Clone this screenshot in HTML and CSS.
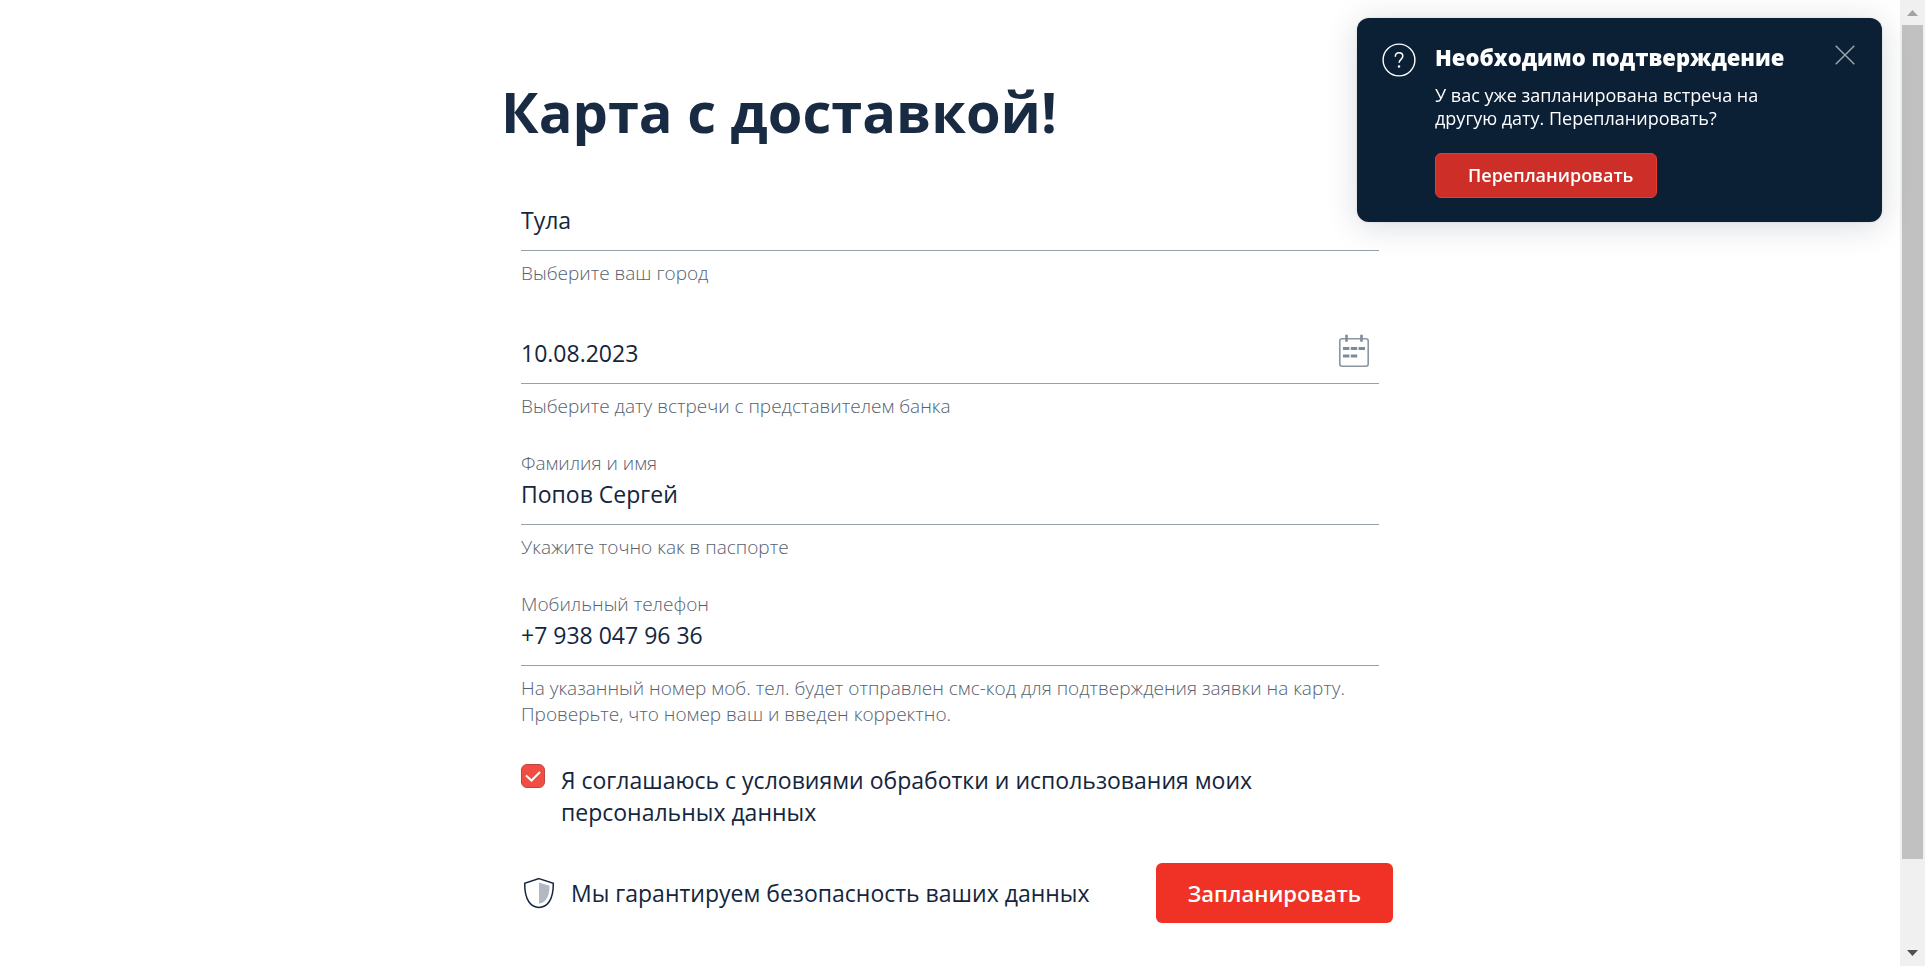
FILE: index.html
```html
<!DOCTYPE html>
<html lang="ru">
<head>
  <meta charset="utf-8">
  <meta name="viewport" content="width=device-width, initial-scale=1">
  <title>Карта с доставкой!</title>
  <link rel="stylesheet" href="styles.css">
</head>
<body>
  <div class="page">
    <main class="content">
      <h1 class="title">Карта с доставкой!</h1>
      <form class="form">
        <div class="field">
          <input class="field__input" id="city" type="text" value="Тула" aria-label="Город" aria-describedby="city-hint">
          <p class="field__hint" id="city-hint">Выберите ваш город</p>
        </div>

        <div class="field field--date">
          <div class="field__box">
            <input class="field__input" id="date" type="text" value="10.08.2023" aria-label="Дата встречи" aria-describedby="date-hint">
            <button class="calendar" type="button" aria-label="Открыть календарь">
              <svg width="32" height="34" viewBox="0 0 32 34" fill="none">
                <rect x="1.8" y="4.8" width="28.4" height="27.4" rx="2.2" stroke="#8a95a1" stroke-width="1.6"/>
                <path d="M8.5 .8v7M23.5 .8v7" stroke="#7f8b98" stroke-width="2.6"/>
                <path d="M5 14.5h6.4M12.8 14.5h6.4M20.6 14.5h6.4M5 22h6.4M12.8 22h6.4" stroke="#7f8b98" stroke-width="3"/>
              </svg>
            </button>
          </div>
          <p class="field__hint" id="date-hint">Выберите дату встречи с представителем банка</p>
        </div>

        <div class="field">
          <label class="field__label" for="name">Фамилия и имя</label>
          <input class="field__input" id="name" type="text" value="Попов Сергей" aria-describedby="name-hint">
          <p class="field__hint" id="name-hint">Укажите точно как в паспорте</p>
        </div>

        <div class="field">
          <label class="field__label" for="phone">Мобильный телефон</label>
          <input class="field__input" id="phone" type="tel" value="+7 938 047 96 36" aria-describedby="phone-hint">
          <p class="field__hint" id="phone-hint">На указанный номер моб. тел. будет отправлен смс-код для подтверждения заявки на карту. Проверьте, что номер ваш и введен корректно.</p>
        </div>

        <div class="agreement">
          <span class="checkbox">
            <input class="checkbox__input" id="agree" type="checkbox" checked>
            <svg class="checkbox__tick" width="24" height="24" viewBox="0 0 24 24" fill="none" aria-hidden="true">
              <path d="M5 11.5l5.5 5L19 8" stroke="#fff" stroke-width="2"/>
            </svg>
          </span>
          <label class="agreement__text" for="agree">Я соглашаюсь с условиями обработки и использования моих персональных данных</label>
        </div>

        <div class="footer">
          <svg width="32" height="32" viewBox="0 0 32 32" fill="none" aria-hidden="true">
            <path d="M16 1.6L30.3 6.2C30.4 14 29.5 20 26 25 23.5 28.5 20 30.4 16 30.4S8.5 28.5 6 25C2.5 20 1.6 14 1.7 6.2z" stroke="#14263d" stroke-width="1.5"/>
            <path d="M16 5.5l10.5 3.3c0 6-.9 10.2-3.4 13.7-1.9 2.7-4.3 4-7.1 4.1z" fill="#b3b9c2"/>
          </svg>
          <p class="footer__text">Мы гарантируем безопасность ваших данных</p>
          <button class="submit" type="submit">Запланировать</button>
        </div>
      </form>
    </main>
    <div class="scrollbar" aria-hidden="true">
      <svg width="25" height="25" viewBox="0 0 25 25"><path d="M7 16h11l-5.5-6z" fill="#a3a3a3"/></svg>
      <div class="scrollbar__track"><div class="scrollbar__thumb"></div></div>
      <svg width="25" height="25" viewBox="0 0 25 25"><path d="M7 9h11l-5.5 6z" fill="#505050"/></svg>
    </div>
  </div>

  <section class="toast" role="alertdialog" aria-labelledby="toast-title" aria-describedby="toast-text">
    <svg width="34" height="34" viewBox="0 0 34 34" fill="none" aria-hidden="true">
      <circle cx="17" cy="17" r="15.9" stroke="#fff" stroke-width="1.4"/>
      <path d="M13.3 13.7c0-2.6 1.6-4 3.8-4s3.7 1.3 3.7 3.4c0 3.2-3.7 3.3-3.7 6.7" stroke="#fff" stroke-width="1.5"/>
      <circle cx="17" cy="23.5" r="1.2" fill="#fff"/>
    </svg>
    <div class="toast__body">
      <h2 class="toast__title" id="toast-title">Необходимо подтверждение</h2>
      <p class="toast__text" id="toast-text">У вас уже запланирована встреча на другую дату. Перепланировать?</p>
      <button class="toast__action" type="button">Перепланировать</button>
    </div>
    <button class="toast__close" type="button" aria-label="Закрыть">
      <svg width="20" height="20" viewBox="0 0 20 20" fill="none"><path d="M.7.7l18.6 18.6M19.3.7L.7 19.3" stroke="#9fa7b1" stroke-width="1.4"/></svg>
    </button>
  </section>
</body>
</html>
```
FILE: styles.css
```css
* {
  box-sizing: border-box;
}

body,
h1,
h2,
p {
  margin: 0;
}

body {
  background: #fff;
  color: #14263d;
  font-family: "Open Sans", "Noto Sans", sans-serif;
  font-size: 23px;
  line-height: 32px;
  overflow: hidden;
}

button,
input {
  font: inherit;
  color: inherit;
}

button {
  border: 0;
  padding: 0;
  background: none;
  cursor: pointer;
}

svg {
  display: block;
  flex: none;
}

.page {
  display: flex;
  height: 100vh;
}

.content {
  flex: 1;
  max-width: 898px;
  margin: 0 auto;
  padding-top: 71px;
}

.title {
  color: #182b42;
  font-size: 56px;
  line-height: 80px;
  font-weight: 700;
}

.form {
  padding: 51px 20px 0;
}

.field {
  margin-bottom: 31px;
}

.field--date {
  padding-top: 18px;
}

.field__box {
  position: relative;
}

.field__label {
  display: block;
  color: #56626f;
  font-size: 19px;
  font-weight: 300;
  line-height: 26px;
}

.field__input {
  display: block;
  width: 100%;
  height: 49px;
  padding: 0 0 12px;
  border: 0;
  border-bottom: 1px solid #96a1ac;
  border-radius: 0;
  background: none;
  outline: 0;
}

.field__hint {
  margin-top: 9px;
  color: #56626f;
  font-size: 19px;
  font-weight: 300;
  line-height: 26px;
}

.calendar {
  position: absolute;
  right: 9px;
  bottom: 16px;
}

.agreement {
  display: flex;
  gap: 16px;
  width: 740px;
  max-width: 100%;
  margin-top: 37px;
}

.checkbox {
  position: relative;
  flex: none;
  width: 24px;
  height: 24px;
}

.checkbox__input {
  appearance: none;
  display: block;
  width: 24px;
  height: 24px;
  margin: 0;
  border: 1px solid #bd4441;
  border-radius: 6px;
  background: #f24d43;
}

.checkbox__tick {
  position: absolute;
  inset: 0;
  pointer-events: none;
}

.footer {
  display: flex;
  align-items: center;
  gap: 16px;
  margin: 35px -14px 0 2px;
}

.submit {
  margin-left: auto;
  padding: 14px 32px;
  border-radius: 6px;
  background: #f03226;
  color: #fff;
  font-size: 22px;
  font-weight: 600;
}

.scrollbar {
  display: flex;
  flex-direction: column;
  flex: none;
  width: 25px;
  background: #f0f0f0;
}

.scrollbar__track {
  flex: 1;
  padding: 0 2px;
}

.scrollbar__thumb {
  height: 91%;
  background: #c1c1c1;
}

.toast {
  position: fixed;
  top: 18px;
  right: 43px;
  display: flex;
  width: 525px;
  padding: 23px 27px 24px 25px;
  border-radius: 12px;
  background: #0b1f35;
  box-shadow: 0 0 2px rgba(11, 31, 53, .16), 0 4px 32px rgba(11, 31, 53, .16);
  color: #fff;
}

.toast > svg {
  margin-top: 2px;
}

.toast__body {
  flex: 1;
  padding-left: 19px;
}

.toast__title {
  font-size: 22px;
  line-height: 32px;
  font-weight: 800;
}

.toast__text {
  max-width: 350px;
  margin: 11px 0 23px;
  font-size: 18px;
  line-height: 23px;
}

.toast__action {
  padding: 0 23px 0 32px;
  border: 1px solid #ee3a2c;
  border-radius: 6px;
  background: #cd2f28;
  font-size: 18px;
  line-height: 43px;
  font-weight: 600;
}

.toast__close {
  align-self: flex-start;
  margin-top: 4px;
}
```
